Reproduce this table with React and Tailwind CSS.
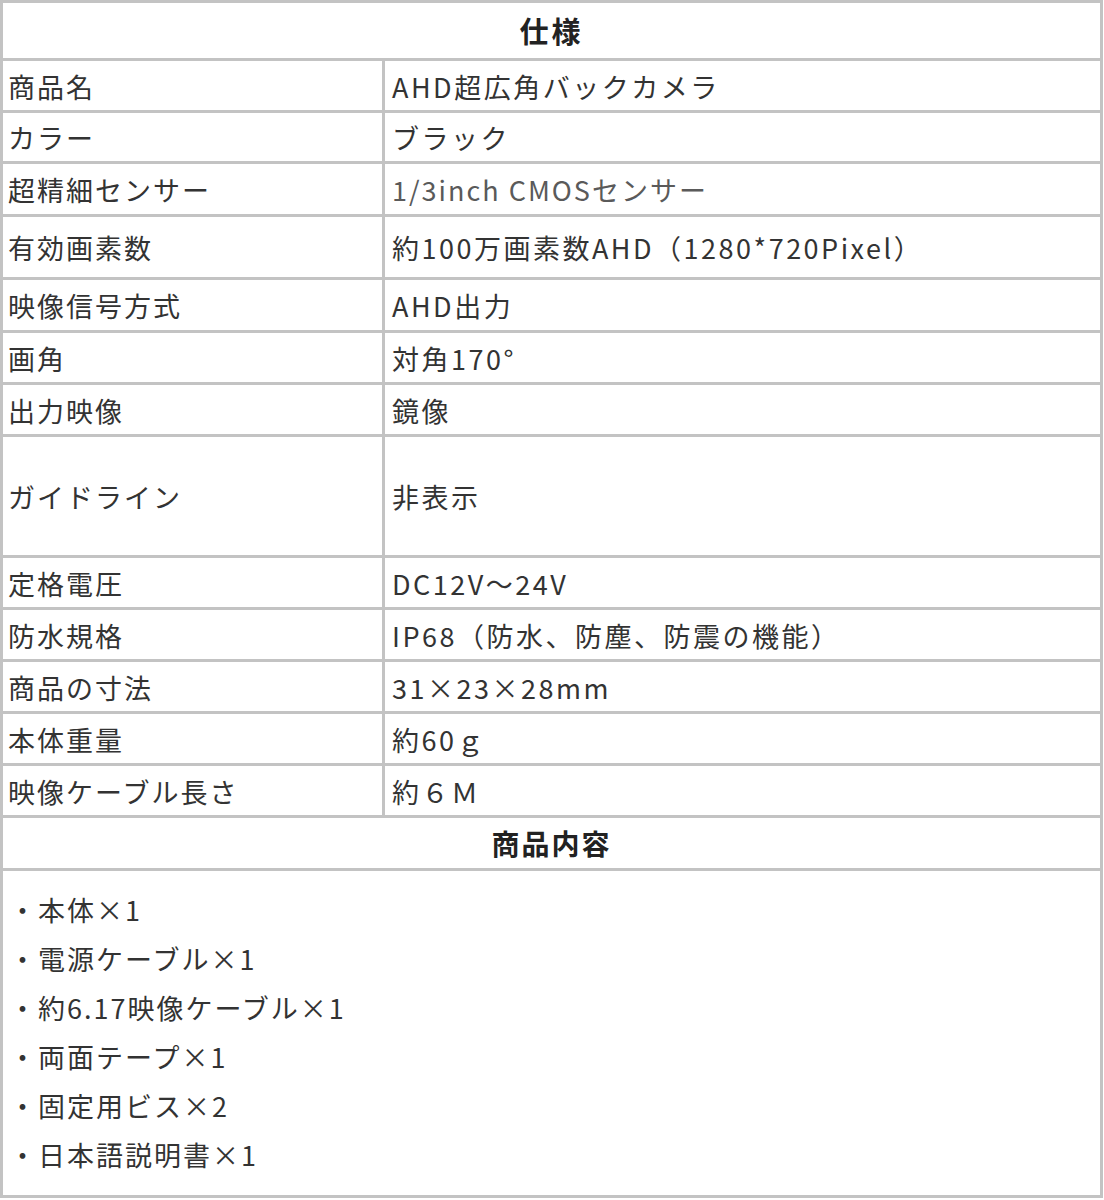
const specs = [
  { label: '商品名', value: 'AHD超広角バックカメラ', h: 'h-[52px]' },
  { label: 'カラー', value: 'ブラック', h: 'h-[51px]' },
  { label: '超精細センサー', value: '1/3inch CMOSセンサー', h: 'h-[53px]', light: true },
  { label: '有効画素数', value: '約100万画素数AHD（1280*720Pixel）', h: 'h-[63px]' },
  { label: '映像信号方式', value: 'AHD出力', h: 'h-[53px]' },
  { label: '画角', value: '対角170°', h: 'h-[52px]' },
  { label: '出力映像', value: '鏡像', h: 'h-[52px]' },
  { label: 'ガイドライン', value: '非表示', h: 'h-[121px]' },
  { label: '定格電圧', value: 'DC12V～24V', h: 'h-[52px]' },
  { label: '防水規格', value: 'IP68（防水、防塵、防震の機能）', h: 'h-[52px]' },
  { label: '商品の寸法', value: '31×23×28mm', h: 'h-[52px]' },
  { label: '本体重量', value: '約60ｇ', h: 'h-[52px]' },
  { label: '映像ケーブル長さ', value: '約６Ｍ', h: 'h-[52px]' },
];

const contents = [
  '・本体×1',
  '・電源ケーブル×1',
  '・約6.17映像ケーブル×1',
  '・両面テープ×1',
  '・固定用ビス×2',
  '・日本語説明書×1',
];

const App = () => {
  return (
    <div
      className="w-[1104px] h-[1200px] bg-white text-[#333] text-[27px] tracking-[2px]"
      style={{ fontFamily: '"Noto Sans CJK JP", "Noto Sans", sans-serif' }}
    >
      <div className="w-[1103px] h-[1198px] border-[3px] border-[#c3c3c3] flex flex-col">
        <div className="h-[58px] border-b-[3px] border-[#c3c3c3] flex items-center justify-center font-bold text-[29px] tracking-[3px] text-[#222]">
          仕様
        </div>

        {specs.map((row) => (
          <div key={row.label} className={`${row.h} border-b-[3px] border-[#c3c3c3] flex`}>
            <div className="w-[382px] border-r-[3px] border-[#c3c3c3] flex items-center pl-[5px] pt-[3px] whitespace-nowrap">
              {row.label}
            </div>
            <div className={`flex-1 flex items-center pl-[7px] pt-[3px] whitespace-nowrap tracking-[2.5px] ${row.light ? 'text-[#5a5a5a] tracking-[2px]' : ''}`}>
              {row.value}
            </div>
          </div>
        ))}

        <div className="h-[53px] border-b-[3px] border-[#c3c3c3] flex items-center justify-center font-bold text-[28px] tracking-[2px] text-[#222]">
          商品内容
        </div>

        <div className="flex-1 pt-[15px] pl-[6px] flex flex-col">
          {contents.map((item) => (
            <div key={item} className="h-[49px] flex items-center">
              {item}
            </div>
          ))}
        </div>
      </div>
    </div>
  );
};

export default App;
